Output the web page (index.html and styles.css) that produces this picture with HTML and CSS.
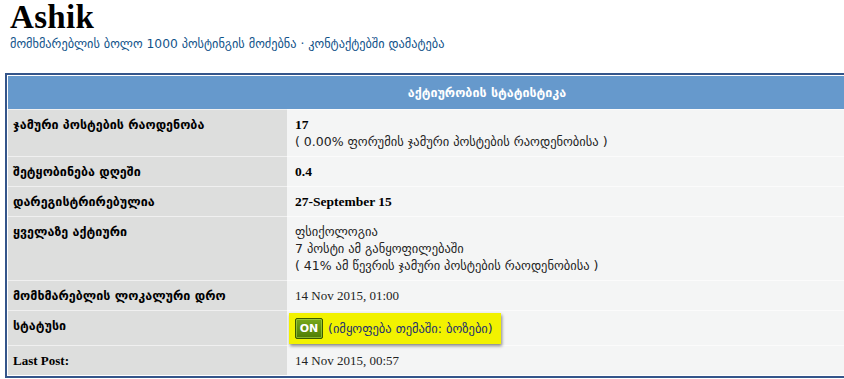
FILE: index.html
```html
<!DOCTYPE html>
<html lang="ka">
<head>
<meta charset="utf-8">
<title>Ashik</title>
<link rel="stylesheet" href="styles.css">
</head>
<body>
<header class="profile-head">
  <h1 class="profile-name">Ashik</h1>
  <p class="profile-links"><a href="#">მომხმარებლის ბოლო 1000 პოსტინგის მოძებნა</a> · <a href="#">კონტაქტებში დამატება</a></p>
</header>
<div class="panel">
  <table class="stats">
    <thead>
      <tr><th colspan="2" class="stats-title">აქტიურობის სტატისტიკა</th></tr>
    </thead>
    <tbody>
      <tr>
        <td class="label">ჯამური პოსტების რაოდენობა</td>
        <td class="value"><b class="num">17</b><br>( 0.00% ფორუმის ჯამური პოსტების რაოდენობისა )</td>
      </tr>
      <tr>
        <td class="label">შეტყობინება დღეში</td>
        <td class="value"><b class="num">0.4</b></td>
      </tr>
      <tr>
        <td class="label">დარეგისტრირებულია</td>
        <td class="value"><b class="num">27-September 15</b></td>
      </tr>
      <tr>
        <td class="label">ყველაზე აქტიური</td>
        <td class="value">ფსიქოლოგია<br>7 პოსტი ამ განყოფილებაში<br>( 41% ამ წევრის ჯამური პოსტების რაოდენობისა )</td>
      </tr>
      <tr>
        <td class="label">მომხმარებლის ლოკალური დრო</td>
        <td class="value serif">14 Nov 2015, 01:00</td>
      </tr>
      <tr>
        <td class="label">სტატუსი</td>
        <td class="value status-cell"><span class="status-box"><span class="on-btn">ON</span><a href="#" class="status-link">(იმყოფება თემაში: ბოზები)</a></span></td>
      </tr>
      <tr>
        <td class="label serif-label">Last Post:</td>
        <td class="value serif">14 Nov 2015, 00:57</td>
      </tr>
    </tbody>
  </table>
</div>
<div class="panel next-panel"></div>
</body>
</html>
```

FILE: styles.css
```css
html {
  overflow: hidden;
}
body {
  margin: 0;
  padding: 0 0 0 5px;
  background: #ffffff;
  font-family: "Liberation Serif", "DejaVu Sans", serif;
  color: #000;
  width: 964px;
}
.profile-head {
  padding-left: 5px;
}
.profile-name {
  margin: 0;
  font-family: "Liberation Serif", serif;
  font-weight: bold;
  font-size: 33px;
  line-height: 34px;
  letter-spacing: 0.3px;
}
.profile-links {
  margin: 2px 0 0;
  font-family: "DejaVu Sans", sans-serif;
  font-size: 12.3px;
  line-height: 16px;
  color: #105289;
}
.profile-links a {
  color: #105289;
  text-decoration: none;
}
.panel {
  margin-top: 21px;
  border: 2px solid #34558a;
  padding: 1px;
  background: #fff;
}
.next-panel {
  margin-top: 2px;
  height: 20px;
  border-bottom: none;
}
.stats {
  width: 100%;
  border-collapse: collapse;
  font-family: "Liberation Serif", "DejaVu Sans", serif;
}
.stats-title {
  background: #6699cc;
  color: #fff;
  font-family: "DejaVu Sans", sans-serif;
  font-weight: bold;
  font-size: 12.5px;
  line-height: 17px;
  padding: 8px 0;
  text-align: center;
}
.label {
  width: 266px;
  background: #dddedd;
  border-top: 1px solid #f0f0f0;
  padding: 6px 8px 6px 5px;
  vertical-align: top;
  font-family: "DejaVu Sans", sans-serif;
  font-weight: bold;
  font-size: 12.5px;
  line-height: 17px;
}
.serif-label {
  font-family: "Liberation Serif", serif;
  font-size: 13px;
}
.value {
  background: #f4f5f5;
  border-top: 1px solid #fbfbfb;
  padding: 6px 8px;
  vertical-align: top;
  font-family: "DejaVu Sans", sans-serif;
  font-size: 12.5px;
  line-height: 17px;
  color: #222;
}
.num {
  font-family: "Liberation Serif", serif;
  font-size: 13.5px;
  color: #000;
}
.serif {
  font-family: "Liberation Serif", serif;
  font-size: 13px;
}
.status-cell {
  padding-top: 2px;
  padding-bottom: 1px;
}
.status-box {
  display: inline-flex;
  align-items: center;
  gap: 5px;
  margin-left: -6px;
  padding: 5px 8px 5px 6px;
  background: #f2f200;
  box-shadow: 1px 2px 3px rgba(0, 0, 0, 0.45);
}
.on-btn {
  display: inline-block;
  width: 26px;
  height: 19px;
  line-height: 19px;
  text-align: center;
  color: #fff;
  font-family: "DejaVu Sans", sans-serif;
  font-weight: bold;
  font-size: 11px;
  background: linear-gradient(#77a81a, #4f7d05);
  border: 1px solid #3b5a00;
  border-radius: 2px;
  box-shadow: inset 0 0 0 1px rgba(190, 230, 90, 0.5);
}
.status-link {
  color: #1a2f70;
  text-decoration: none;
  font-size: 12.5px;
}
```
